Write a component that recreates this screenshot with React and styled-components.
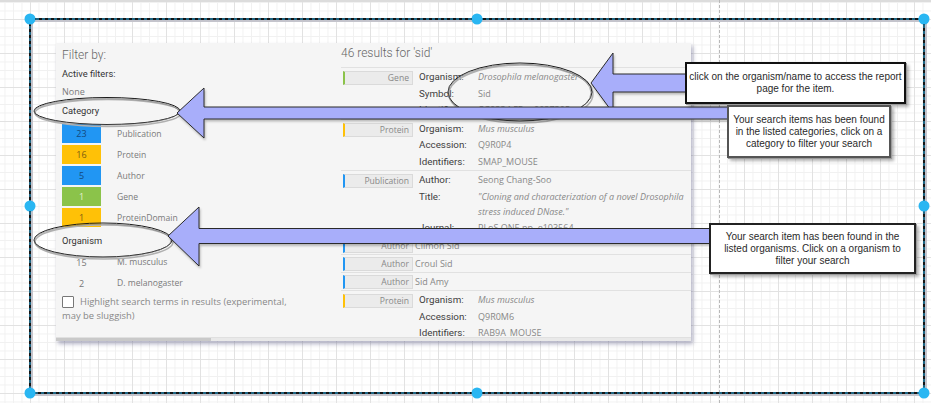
import React from "react";
import styled, { createGlobalStyle } from "styled-components";

const GlobalStyle = createGlobalStyle`
  html, body {
    margin: 0;
    padding: 0;
    background: #fff;
  }
  body {
    font-family: "Open Sans", "Noto Sans", sans-serif;
  }
`;

const Canvas = styled.div`
  position: relative;
  width: 931px;
  height: 403px;
  overflow: hidden;
  background-color: #fff;
  background-image: linear-gradient(#e2e2e2 1px, transparent 1px),
    linear-gradient(90deg, #e2e2e2 1px, transparent 1px),
    linear-gradient(#f1f1f1 1px, transparent 1px),
    linear-gradient(90deg, #f1f1f1 1px, transparent 1px);
  background-size: 34px 34px, 34px 34px, 8.5px 8.5px, 8.5px 8.5px;
  background-position: 30px 19px;
`;

const TopStrip = styled.div`
  height: 2px;
  background: #dcdcdc;
`;

const Guide = styled.div`
  position: absolute;
  left: 719px;
  top: 0;
  bottom: 0;
  border-left: 1px dashed #b8b8b8;
`;

const Panel = styled.div`
  position: absolute;
  left: 56px;
  top: 43px;
  width: 635px;
  height: 298px;
  display: flex;
  flex-direction: column;
  background: #f5f5f5;
  box-shadow: 2px 3px 4px rgba(90, 90, 130, 0.45);
`;

const Body = styled.div`
  flex: 1;
  min-height: 0;
  display: grid;
  grid-template-columns: 279px 1fr;
  padding-left: 6px;
`;

const Scroll = styled.div`
  position: relative;
  height: 3px;
  background: #e9e9e9;
  border-top: 1px solid #e0e0e0;
  &::before {
    content: "";
    display: block;
    width: 155px;
    height: 3px;
    background: #c9c9c9;
  }
`;

const Column = styled.div`
  display: flex;
  flex-direction: column;
`;

const Heading = styled.div`
  margin-top: ${(p) => p.$mt}px;
  font-family: Roboto, sans-serif;
  font-weight: 300;
  font-size: 12px;
  line-height: 18px;
  color: #666;
`;

const SubHeading = styled.div`
  margin-top: ${(p) => p.$mt}px;
  font-family: Roboto, sans-serif;
  font-size: 9.3px;
  font-weight: 400;
  line-height: 13px;
  color: #333;
`;

const Plain = styled.div`
  margin-top: ${(p) => p.$mt}px;
  font-size: 9px;
  line-height: 13px;
  color: #7a7a7a;
`;

const FacetList = styled.div`
  margin-top: ${(p) => p.$mt}px;
  display: flex;
  flex-direction: column;
  gap: 2px;
`;

const Facet = styled.div`
  display: flex;
  align-items: center;
  height: 19px;
`;

const Count = styled.div`
  width: 39px;
  height: 19px;
  display: flex;
  align-items: center;
  justify-content: center;
  background: ${(p) => p.$bg || "transparent"};
  color: ${(p) => p.$ink || "#777"};
  font-size: 9px;
`;

const FacetName = styled.div`
  margin-left: 16px;
  font-size: 8.6px;
  color: #7a7a7a;
`;

const Highlight = styled.div`
  margin-top: ${(p) => p.$mt}px;
  width: 236px;
  font-size: 9.4px;
  line-height: 14px;
  color: #888;
`;

const Check = styled.span`
  display: inline-block;
  width: 10px;
  height: 10px;
  margin-right: 6px;
  vertical-align: -3px;
  border: 1px solid #777;
  background: #fff;
  border-radius: 1px;
`;

const Results = styled.div`
  margin-top: 5px;
  display: flex;
  flex-direction: column;
`;

const Row = styled.div`
  display: flex;
  align-items: flex-start;
  padding-left: 2px;
  border-top: 1px solid #e1e1e1;
  min-height: ${(p) => (p.$compact ? "17px" : "auto")};
`;

const TypeBox = styled.div`
  box-sizing: border-box;
  flex: none;
  width: 70px;
  height: 14px;
  margin-top: ${(p) => (p.$compact ? 2 : 3)}px;
  padding-right: 3px;
  background: #ebebeb;
  border: 1px solid #dadada;
  border-left: 2px solid ${(p) => p.$color};
  text-align: right;
  font-size: 8.6px;
  line-height: 12px;
  color: #888;
`;

const Fields = styled.div`
  margin-left: 6px;
  padding-top: 1px;
  display: grid;
  grid-template-columns: 59px 1fr;
  line-height: 16.5px;
`;

const Label = styled.div`
  font-family: Roboto, sans-serif;
  font-size: 9.8px;
  font-weight: 400;
  color: #404040;
`;

const Value = styled.div`
  font-size: 9px;
  color: #888;
  font-style: ${(p) => (p.$italic ? "italic" : "normal")};
  line-height: ${(p) => (p.$tight ? "15.5px" : "inherit")};
  white-space: nowrap;
`;

const Inline = styled.div`
  margin-left: 2px;
  font-size: 9px;
  line-height: 17px;
  color: #888;
`;

const Overlay = styled.svg`
  position: absolute;
  left: 0;
  top: 0;
  pointer-events: none;
`;

const Callout = styled.div`
  position: absolute;
  left: ${(p) => p.$x}px;
  top: ${(p) => p.$y}px;
  width: ${(p) => p.$w}px;
  height: ${(p) => p.$h}px;
  box-sizing: border-box;
  display: flex;
  align-items: center;
  justify-content: center;
  text-align: center;
  background: #fff;
  border: 2px solid ${(p) => p.$line};
  box-shadow: 1px 1px 0 #9a9a9a, 3px 3px 3px rgba(0, 0, 0, 0.3);
  font-family: "Liberation Sans", Arial, sans-serif;
  font-size: 10px;
  line-height: 12px;
  color: #2a2a2a;
`;

const categories = [
  { n: 23, name: "Publication", bg: "#2196f3", ink: "#14497c" },
  { n: 16, name: "Protein", bg: "#ffc107", ink: "#7a5d12" },
  { n: 5, name: "Author", bg: "#2196f3", ink: "#14497c" },
  { n: 1, name: "Gene", bg: "#8bc34a", ink: "#e4f0cf" },
  { n: 1, name: "ProteinDomain", bg: "#ffc107", ink: "#7a5d12" },
];

const organisms = [
  { n: 15, name: "M. musculus" },
  { n: 2, name: "D. melanogaster" },
];

const handles = [
  [30, 19], [477, 19], [924, 19],
  [30, 206], [924, 206],
  [30, 393], [477, 393], [924, 393],
];

const ARROW = "#a8aefa";

const Sketch = ({ cx, cy, rx, ry }) => (
  <g fill="none">
    <ellipse cx={cx + 1} cy={cy + 2} rx={rx} ry={ry} stroke="#b0b0b0" strokeWidth="1.5" />
    <ellipse cx={cx} cy={cy} rx={rx} ry={ry} stroke="#1a1a1a" strokeWidth="1" />
    <ellipse cx={cx - 0.5} cy={cy + 0.8} rx={rx - 0.5} ry={ry - 0.3} stroke="#777" strokeWidth="0.6" />
  </g>
);

const App = () => {
  return (
    <>
      <GlobalStyle />
      <Canvas>
        <TopStrip />
        <Guide />
        <Panel>
          <Body>
            <Column>
              <Heading $mt={3}>Filter by:</Heading>
              <SubHeading $mt={2.5}>Active filters:</SubHeading>
              <Plain $mt={5}>None</Plain>
              <SubHeading $mt={6}>Category</SubHeading>
              <FacetList $mt={7.5}>
                {categories.map((c) => (
                  <Facet key={c.name}>
                    <Count $bg={c.bg} $ink={c.ink}>{c.n}</Count>
                    <FacetName>{c.name}</FacetName>
                  </Facet>
                ))}
              </FacetList>
              <SubHeading $mt={6.5}>Organism</SubHeading>
              <FacetList $mt={6}>
                {organisms.map((o) => (
                  <Facet key={o.name}>
                    <Count>{o.n}</Count>
                    <FacetName>{o.name}</FacetName>
                  </Facet>
                ))}
              </FacetList>
              <Highlight $mt={2.5}>
                <Check />
                Highlight search terms in results (experimental, may be sluggish)
              </Highlight>
            </Column>

            <Column>
              <Heading $mt={1}>46 results for 'sid'</Heading>
              <Results>
                <Row>
                  <TypeBox $color="#8bc34a">Gene</TypeBox>
                  <Fields>
                    <Label>Organism:</Label>
                    <Value $italic>Drosophila melanogaster</Value>
                    <Label>Symbol:</Label>
                    <Value>Sid</Value>
                    <Label>Identifiers:</Label>
                    <Value>CG9334 FBgn0037305</Value>
                  </Fields>
                </Row>
                <Row>
                  <TypeBox $color="#ffc107">Protein</TypeBox>
                  <Fields>
                    <Label>Organism:</Label>
                    <Value $italic>Mus musculus</Value>
                    <Label>Accession:</Label>
                    <Value>Q9R0P4</Value>
                    <Label>Identifiers:</Label>
                    <Value>SMAP_MOUSE</Value>
                  </Fields>
                </Row>
                <Row>
                  <TypeBox $color="#2196f3">Publication</TypeBox>
                  <Fields>
                    <Label>Author:</Label>
                    <Value>Seong Chang-Soo</Value>
                    <Label>Title:</Label>
                    <Value $italic $tight>
                      "Cloning and characterization of a novel Drosophila
                      <br />
                      stress induced DNase."
                    </Value>
                    <Label>Journal:</Label>
                    <Value>PLoS ONE pp. e103564</Value>
                  </Fields>
                </Row>
                <Row $compact>
                  <TypeBox $compact $color="#2196f3">Author</TypeBox>
                  <Inline>Climon Sid</Inline>
                </Row>
                <Row $compact>
                  <TypeBox $compact $color="#2196f3">Author</TypeBox>
                  <Inline>Croul Sid</Inline>
                </Row>
                <Row $compact>
                  <TypeBox $compact $color="#2196f3">Author</TypeBox>
                  <Inline>Sid Amy</Inline>
                </Row>
                <Row>
                  <TypeBox $color="#ffc107">Protein</TypeBox>
                  <Fields>
                    <Label>Organism:</Label>
                    <Value $italic>Mus musculus</Value>
                    <Label>Accession:</Label>
                    <Value>Q9R0M6</Value>
                    <Label>Identifiers:</Label>
                    <Value>RAB9A_MOUSE</Value>
                  </Fields>
                </Row>
              </Results>
            </Column>
          </Body>
          <Scroll />
        </Panel>

        <Overlay width="931" height="403" viewBox="0 0 931 403">
          <defs>
            <filter id="soft" x="-5%" y="-20%" width="110%" height="140%">
              <feDropShadow dx="1" dy="2" stdDeviation="1" floodColor="#000" floodOpacity="0.25" />
            </filter>
          </defs>

          <rect x="32" y="21" width="894" height="374" fill="none" stroke="#c4c4cc" strokeWidth="2" />
          <rect x="30" y="19" width="894" height="374" fill="none" stroke="#151515" strokeWidth="2" />
          <rect x="30" y="19" width="894" height="374" fill="none" stroke="#29b6f2" strokeWidth="1" strokeDasharray="3 3" />

          <Sketch cx={520} cy={92} rx={72} ry={29} />
          <Sketch cx={107} cy={111} rx={73} ry={13.5} />
          <Sketch cx={103} cy={240} rx={69} ry={17} />

          <g fill={ARROW} stroke="#2a2a2a" strokeWidth="1" strokeLinejoin="miter" filter="url(#soft)">
            <polygon points="591,83 613,53 613,74 686,74 686,92 613,92 613,113" />
            <polygon points="177,113 204,88 204,107 728,107 728,119 204,119 204,138" />
            <polygon points="168,236 199,207 199,228.5 710,228.5 710,243.5 199,243.5 199,266" />
          </g>

          {handles.map(([x, y]) => (
            <circle key={`${x}-${y}`} cx={x} cy={y} r="5.5" fill="#29b6f2" />
          ))}
        </Overlay>

        <Callout $x={685} $y={62} $w={221} $h={42} $line="#111">
          click on the organism/name to access the report
          <br />
          page for the item.
        </Callout>
        <Callout $x={727} $y={105} $w={164} $h={53} $line="#555">
          Your search items has been found
          <br />
          in the listed categories, click on a
          <br />
          category to filter your search
        </Callout>
        <Callout $x={709} $y={223} $w={207} $h={51} $line="#222">
          Your search item has been found in the
          <br />
          listed organisms. Click on a organism to
          <br />
          filter your search
        </Callout>
      </Canvas>
    </>
  );
};

export default App;
